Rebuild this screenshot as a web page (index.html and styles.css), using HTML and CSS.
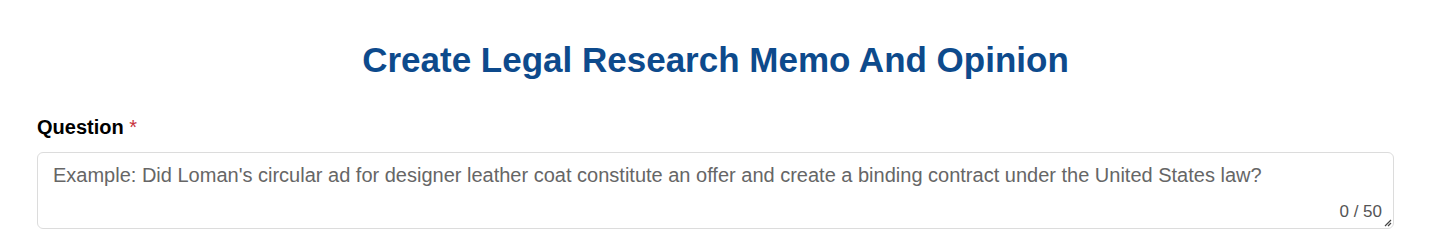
FILE: index.html
```html
<!DOCTYPE html>
<html>
<head>
<meta charset="utf-8">
<link rel="stylesheet" href="styles.css">
</head>
<body>
<div class="page">
  <h1 class="title">Create Legal Research Memo And Opinion</h1>
  <div class="field">
    <label class="label">Question <span class="req">*</span></label>
    <div class="box">
      <div class="placeholder">Example: Did Loman's circular ad for designer leather coat constitute an offer and create a binding contract under the United States law?</div>
      <div class="counter">0 / 50</div>
      <svg class="grip" width="10" height="10" viewBox="0 0 10 10"><path d="M9 3 L3 9 M9 6 L6 9" stroke="#444" stroke-width="1.2" fill="none"/></svg>
    </div>
  </div>
</div>
</body>
</html>
```
FILE: styles.css
```css
html, body { margin: 0; padding: 0; background: #fff; }
body { font-family: "Liberation Sans", Arial, sans-serif; }
.page { padding: 0 42px 0 37px; }
.title {
  margin: 0;
  padding-top: 40px;
  line-height: 40px;
  text-align: center;
  color: #0d4a8c;
  font-size: 35px;
  font-weight: 700;
}
.field { margin-top: 35px; }
.label {
  display: block;
  font-size: 20px;
  font-weight: 700;
  color: #000;
  line-height: 24px;
}
.req { color: #c8323c; font-weight: 400; }
.box {
  position: relative;
  margin-top: 13px;
  height: 77px;
  border: 1px solid #dcdcdc;
  border-radius: 6px;
  box-sizing: border-box;
  display: flex;
  flex-direction: column;
  justify-content: space-between;
  padding: 10px 11px 6px 15px;
}
.placeholder { font-size: 20px; color: #666; line-height: 24px; }
.counter { align-self: flex-end; font-size: 17px; color: #555; line-height: 20px; }
.grip { position: absolute; right: 1px; bottom: 1px; }
```
